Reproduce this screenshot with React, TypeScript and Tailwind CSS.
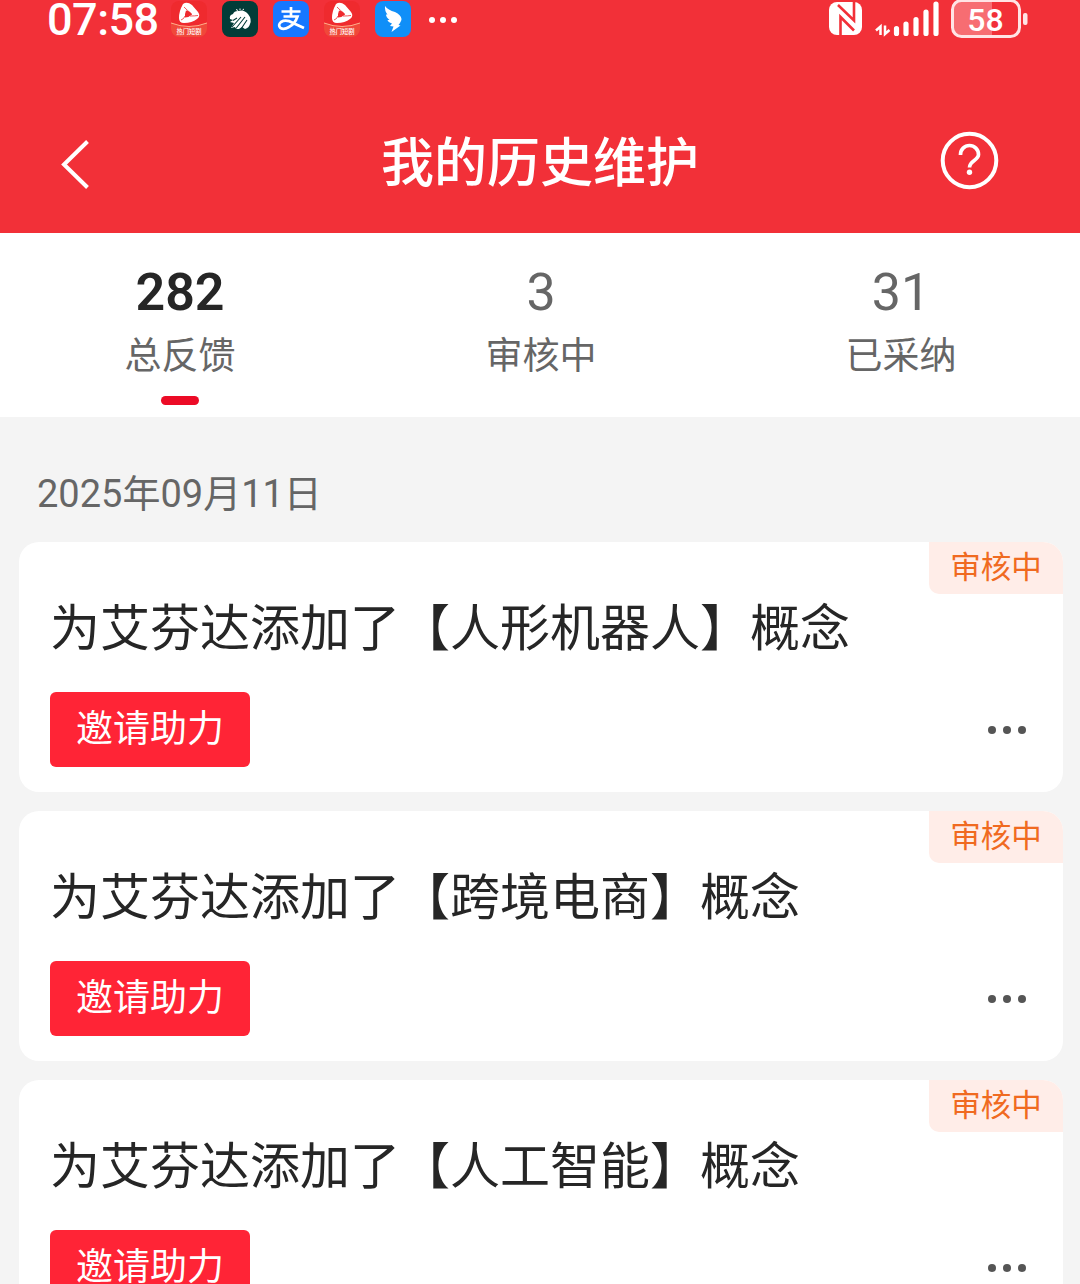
function VideoAppIcon() {
  return (
    <svg className="size-[36px]" viewBox="0 0 36 36">
      <rect width="36" height="36" rx="8" fill="#ef2a2e" />
      <path d="M0 22Q18 29 36 22V28a8 8 0 0 1-8 8H8a8 8 0 0 1-8-8Z" fill="#f0483a" />
      <path d="M0 22Q18 29 36 22" fill="none" stroke="#ffb08c" strokeWidth="1" />
      <path d="M12 3Q16 0 21 4L27 11Q30 15 26 18Q21 22 13 22Q8 22 8 17Q8 10 12 3Z" fill="#fff" />
      <path d="M15 9.500Q19 10 21 13.500Q18 16.500 14 16.500Q13.500 13 15 9.500Z" fill="#ef2a2e" />
      <path d="M13 6Q16 9 21 13.500M27 14.500Q24 15 19 15M10 19Q13 18 14 15" fill="none" stroke="#ef2a2e" strokeWidth="0.800" />
      <text x="18" y="33" textAnchor="middle" fontSize="6.300" fontWeight="500" fill="#fff">热门短剧</text>
    </svg>
  );
}

function StripedAppIcon() {
  return (
    <svg className="size-[36px]" viewBox="0 0 36 36">
      <rect width="36" height="36" rx="8" fill="#023c38" />
      <path d="M8 18Q7 14 11 13Q12 10 16 10Q22 8 26 13Q30 18 28 23Q27 27 23 28L20 26L17 28H14L13 26L9 27L12 22L8 21L11 19Z" fill="#fff" />
      <path d="M10 26L19 16M13.500 28L23 16M19 28L25 19M11 19.500L15 17" stroke="#023c38" strokeWidth="1.100" />
      <path d="M14 8.500L16 9.500M18 7.500V9M22 8L20.500 9" stroke="#fff" strokeWidth="1" />
    </svg>
  );
}

function PayIcon() {
  return (
    <svg className="size-[36px]" viewBox="0 0 36 36">
      <rect width="36" height="36" rx="8" fill="#1677ff" />
      <path d="M8.500 10.500H27.500M18 6V15.500M10.500 15.500H24.500Q22 23 16 26Q11 29 7.500 27Q4.500 24 8 21Q13 18 20 22L31 27" fill="none" stroke="#fff" strokeWidth="2.700" />
    </svg>
  );
}

function WingIcon() {
  return (
    <svg className="size-[36px]" viewBox="0 0 36 36">
      <rect width="36" height="36" rx="8" fill="#108ff8" />
      <path d="M10 5Q13 9 20 11Q26 14 26.500 18Q26.500 20 23.500 24L25.500 24.500L16.500 31L18.500 25.500L15 25L17 22.500Q13 21 12.500 19L14.500 19Q11 16 11 13.500L12.500 13.500Q9.500 10 10 5Z" fill="#fff" />
    </svg>
  );
}

function StatusBar() {
  return (
    <div className="flex h-[40px] items-start text-white">
      <div className="ml-[47px] w-[124px] text-[45px] font-medium leading-[40px] tracking-[-0.500px]">07:58</div>
      <div className="mt-px flex gap-[15px]">
        <VideoAppIcon />
        <StripedAppIcon />
        <PayIcon />
        <VideoAppIcon />
        <WingIcon />
      </div>
      <div className="ml-[18px] mt-[17px] flex gap-[5px]">
        <i className="size-[6px] rounded-full bg-white" />
        <i className="size-[6px] rounded-full bg-white" />
        <i className="size-[6px] rounded-full bg-white" />
      </div>
      <svg className="ml-auto mr-[50px] h-[40px] w-[202px]" viewBox="828 0 202 40">
        <rect x="829" y="2" width="33" height="33" rx="8" fill="#fff" />
        <path d="M840.500 35V17L854 30.500M854 2V20.500L838 5" fill="none" stroke="#f23038" strokeWidth="2.600" />
        <path d="M880.500 35V26.500L876 30.500M885 25.500V34L889.500 30" fill="none" stroke="#fff" strokeWidth="2.500" />
        <path d="M896.500 33.500V28.500M906 33.500V24M916 33.500V19.500M926 33.500V12M936 33.500V4" stroke="#fff" strokeWidth="5.200" strokeLinecap="round" />
        <path d="M961 1H992V37H961a8 8 0 0 1-8-8V9a8 8 0 0 1 8-8Z" fill="#f76d72" />
        <rect x="952.500" y="0.500" width="67" height="36" rx="9" fill="none" stroke="#ffe4e5" strokeWidth="3" />
        <rect x="1023" y="13" width="4.500" height="12" rx="2" fill="#ffe4e5" />
        <text x="985.500" y="31" textAnchor="middle" fontSize="32" fontWeight="500" fill="#fff">58</text>
      </svg>
    </div>
  );
}

function Header() {
  return (
    <header className="h-[233px] bg-[#f23038]">
      <StatusBar />
      <div className="mt-[80px] flex h-[80px] items-center text-white">
        <svg className="ml-[56px] mt-[8px] h-[60px] w-[40px]" viewBox="56 134 40 60">
          <path d="M87.500 141.500L64 164.500L87.500 187.500" fill="none" stroke="#fff" strokeWidth="4" />
        </svg>
        <h1 className="mt-[8px] flex-1 text-center text-[53px] font-medium leading-[80px]">我的历史维护</h1>
        <svg className="mr-[80px] size-[60px] -ml-[44px]" viewBox="0 0 60 60" fill="none" stroke="#fff">
          <circle cx="29.500" cy="30.500" r="26.800" strokeWidth="4" />
          <path d="M20.500 25V24.500a9 9 0 0 1 18 0c0 6-9 6-9 13" strokeWidth="3.700" />
          <circle cx="29.500" cy="42.300" r="2.700" fill="#fff" stroke="none" />
        </svg>
      </div>
    </header>
  );
}

const stats = [
  { value: "282", label: "总反馈", active: true },
  { value: "3", label: "审核中", active: false },
  { value: "31", label: "已采纳", active: false },
];

const concepts = ["人形机器人", "跨境电商", "人工智能"];

function Stats() {
  return (
    <div className="grid h-[184px] grid-cols-3 bg-white pt-[28px] text-center text-[#666]">
      {stats.map((s) => (
        <div key={s.label} className="flex flex-col items-center">
          <div className={s.active ? "h-[64px] text-[52px] font-semibold leading-[64px] text-[#262626]" : "h-[64px] pl-[2px] text-[52px] leading-[64px]"}>{s.value}</div>
          <div className={s.active ? "mt-[2px] h-[60px] text-[37px] leading-[60px]" : "mt-[2px] h-[60px] pl-[2px] text-[37px] leading-[60px]"}>{s.label}</div>
          {s.active && <div className="mt-[9px] h-[9px] w-[38px] rounded-full bg-[#ec0b26]" />}
        </div>
      ))}
    </div>
  );
}

function Card({ concept }: { concept: string }) {
  return (
    <article className="relative h-[250px] shrink-0 overflow-hidden rounded-[20px] bg-white pl-[31px] pt-[52px]">
      <span className="absolute right-0 top-0 h-[52px] w-[134px] rounded-bl-[10px] bg-[#ffede8] text-center text-[30.500px] leading-[51px] text-[#f06a20]">审核中</span>
      <h2 className="h-[70px] whitespace-nowrap text-[50px] leading-[70px] text-[#262626]">为艾芬达添加了【{concept}】概念</h2>
      <div className="mt-[28px] flex h-[75px] items-center justify-between pr-[37px]">
        <button className="flex h-[75px] w-[200px] justify-center rounded-[6px] bg-[#ff2436] text-[37px] leading-[76px] text-white">邀请助力</button>
        <div className="flex gap-[7px]">
          <i className="size-[8px] rounded-full bg-[#555]" />
          <i className="size-[8px] rounded-full bg-[#555]" />
          <i className="size-[8px] rounded-full bg-[#555]" />
        </div>
      </div>
    </article>
  );
}

export default function App() {
  return (
    <div className="h-[1284px] w-[1080px] overflow-hidden bg-[#f4f4f4] font-[Roboto,'Noto_Sans_CJK_SC',sans-serif]">
      <Header />
      <Stats />
      <div className="h-[125px] pl-[37px] pt-[47px] text-[38px] leading-[60px] text-[#666]">2025年09月11日</div>
      <main className="ml-[19px] flex w-[1044px] flex-col gap-[19px]">
        {concepts.map((c) => (
          <Card key={c} concept={c} />
        ))}
      </main>
    </div>
  );
}
